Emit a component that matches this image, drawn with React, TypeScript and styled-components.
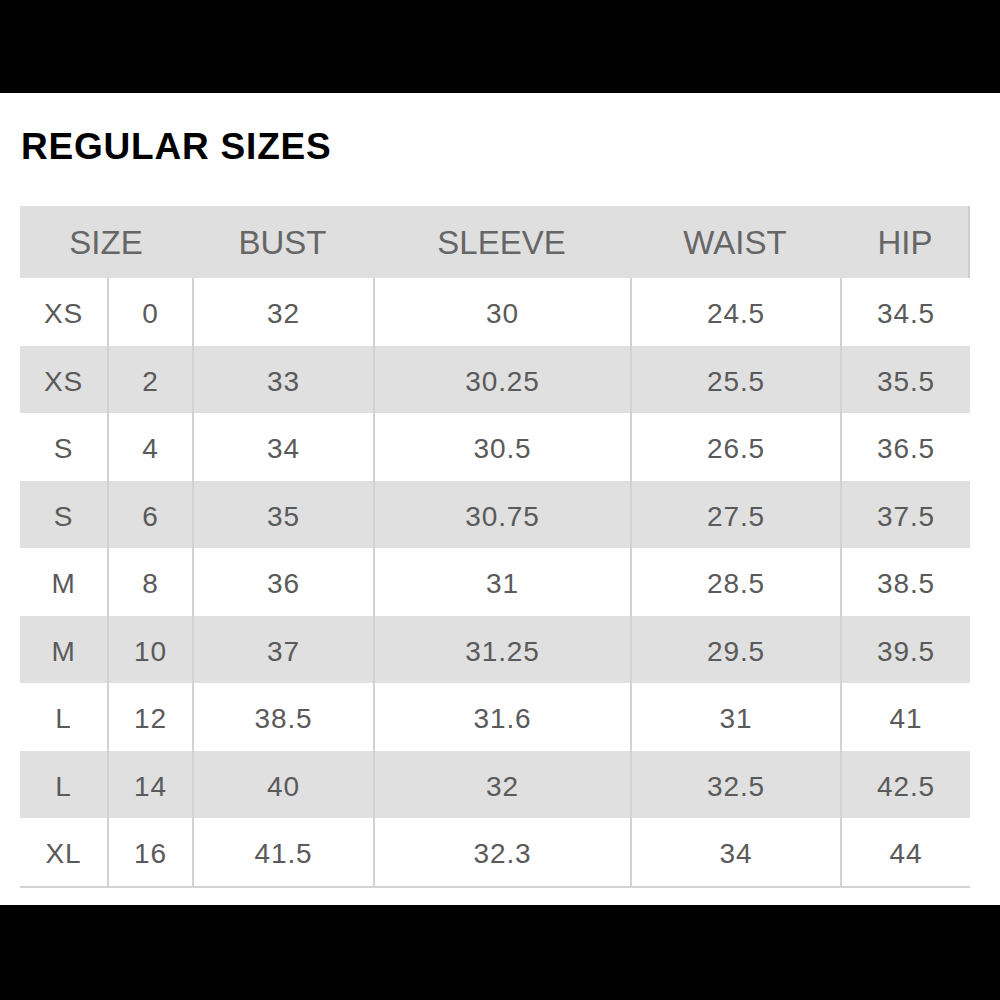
import styled, { createGlobalStyle } from "styled-components";

const GlobalStyle = createGlobalStyle`
  body {
    margin: 0;
    background: #000;
    font-family: "Liberation Sans", Arial, Helvetica, sans-serif;
  }
`;

const COLUMNS = '87px 85px 181px 257px 210px 130px';

const Page = styled.div`
  display: flex;
  flex-direction: column;
  height: 1000px;
  width: 1000px;
`;

const Band = styled.div<{ height: number }>`
  height: ${({ height }) => height}px;
  background: #000;
  flex-shrink: 0;
`;

const Sheet = styled.div`
  background: #fff;
  height: 812px;
  padding: 34.5px 0 0 20px;
  box-sizing: border-box;
`;

const Title = styled.h1`
  margin: 0 0 41.5px 1px;
  font-size: 37px;
  line-height: 1;
  font-weight: bold;
  letter-spacing: 0.8px;
  color: #000;
`;

const Table = styled.div`
  width: 950px;
  border-bottom: 2px solid #d2d2d2;
`;

const HeaderRow = styled.div`
  display: grid;
  grid-template-columns: ${COLUMNS};
  height: 72px;
  background: #dfdfdf;
  box-shadow: inset -2px 0 0 #cdcdcd;
`;

const HeadCell = styled.div<{ span?: number }>`
  grid-column: span ${({ span }) => span ?? 1};
  display: flex;
  align-items: center;
  justify-content: center;
  font-size: 33px;
  line-height: 1;
  color: #666;
`;

const Row = styled.div<{ shaded: boolean }>`
  display: grid;
  grid-template-columns: ${COLUMNS};
  height: 67.5px;
  background: ${({ shaded }) => (shaded ? '#e0e0e0' : '#fff')};
`;

const Cell = styled.div<{ divider: boolean }>`
  display: flex;
  align-items: center;
  justify-content: center;
  padding-top: 5px;
  box-sizing: border-box;
  font-size: 28px;
  line-height: 1;
  letter-spacing: 0.9px;
  color: #5a5a5a;
  border-left: ${({ divider }) => (divider ? '2px solid #d2d2d2' : 'none')};
`;

const headers: Array<[string, number]> = [
  ['SIZE', 2],
  ['BUST', 1],
  ['SLEEVE', 1],
  ['WAIST', 1],
  ['HIP', 1],
];

const rows = [
  ['XS', '0', '32', '30', '24.5', '34.5'],
  ['XS', '2', '33', '30.25', '25.5', '35.5'],
  ['S', '4', '34', '30.5', '26.5', '36.5'],
  ['S', '6', '35', '30.75', '27.5', '37.5'],
  ['M', '8', '36', '31', '28.5', '38.5'],
  ['M', '10', '37', '31.25', '29.5', '39.5'],
  ['L', '12', '38.5', '31.6', '31', '41'],
  ['L', '14', '40', '32', '32.5', '42.5'],
  ['XL', '16', '41.5', '32.3', '34', '44'],
];

export default function App() {
  return (
    <>
      <GlobalStyle />
      <Page>
        <Band height={93} />
        <Sheet>
          <Title>REGULAR SIZES</Title>
          <Table>
            <HeaderRow>
              {headers.map(([label, span]) => (
                <HeadCell key={label} span={span}>{label}</HeadCell>
              ))}
            </HeaderRow>
            {rows.map((row, i) => (
              <Row key={i} shaded={i % 2 === 1}>
                {row.map((value, j) => (
                  <Cell key={j} divider={j > 0}>{value}</Cell>
                ))}
              </Row>
            ))}
          </Table>
        </Sheet>
        <Band height={95} />
      </Page>
    </>
  );
}
